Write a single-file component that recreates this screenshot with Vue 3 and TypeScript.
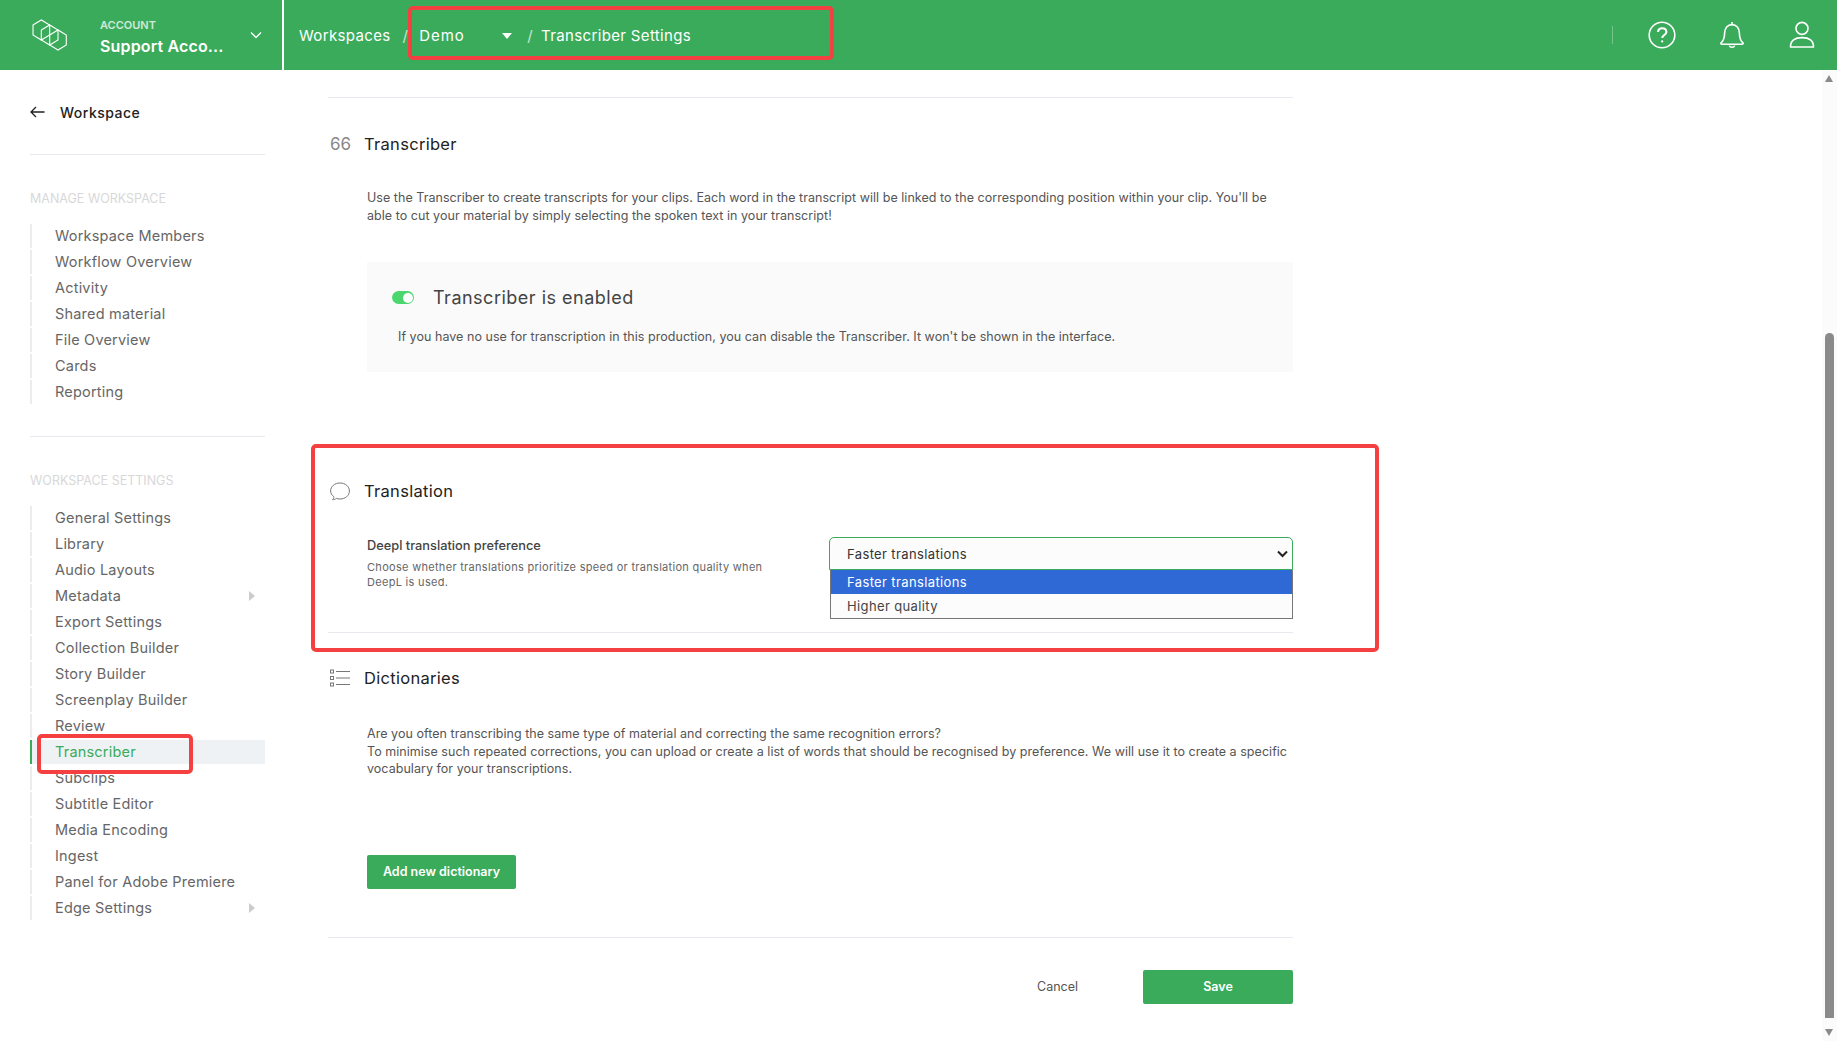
<script setup lang="ts">
interface NavItem {
  label: string
  active?: boolean
  more?: boolean
}

const manageItems: NavItem[] = [
  { label: 'Workspace Members' },
  { label: 'Workflow Overview' },
  { label: 'Activity' },
  { label: 'Shared material' },
  { label: 'File Overview' },
  { label: 'Cards' },
  { label: 'Reporting' },
]

const settingsItems: NavItem[] = [
  { label: 'General Settings' },
  { label: 'Library' },
  { label: 'Audio Layouts' },
  { label: 'Metadata', more: true },
  { label: 'Export Settings' },
  { label: 'Collection Builder' },
  { label: 'Story Builder' },
  { label: 'Screenplay Builder' },
  { label: 'Review' },
  { label: 'Transcriber', active: true },
  { label: 'Subclips' },
  { label: 'Subtitle Editor' },
  { label: 'Media Encoding' },
  { label: 'Ingest' },
  { label: 'Panel for Adobe Premiere' },
  { label: 'Edge Settings', more: true },
]
</script>

<template>
  <div class="page">
    <header class="topbar">
      <div class="account">
        <svg class="logo" width="36" height="32" viewBox="0 0 36 32" fill="none" stroke="#fff" stroke-width="1.1">
          <path d="M2 6 L10.3 1 L18.7 6 L18.7 16 L10.3 21 L2 16 Z" />
          <path d="M10.3 11 L18.7 6 L27 11 L27 21 L18.7 26 L10.3 21 L10.3 11" />
          <path d="M18.7 16 L27 11 L35.3 16 L35.3 26 L27 31 L18.7 26 L18.7 16" />
        </svg>
        <div class="account-text">
          <span class="account-label">ACCOUNT</span>
          <span class="account-name">Support Acco...</span>
        </div>
        <svg class="chevron" width="12" height="8" viewBox="0 0 12 8" fill="none" stroke="#fff" stroke-width="1.3">
          <path d="M1 1.5 L6 6.5 L11 1.5" />
        </svg>
      </div>
      <nav class="crumbs">
        <span>Workspaces</span>
        <span class="sep first">/</span>
        <span class="demo">Demo</span>
        <span class="caret"></span>
        <span class="sep">/</span>
        <span>Transcriber Settings</span>
      </nav>
      <div class="top-icons">
        <span class="icon-sep"></span>
        <svg width="30" height="30" viewBox="0 0 30 30" fill="none" stroke="#fff" stroke-width="1.6">
          <circle cx="15" cy="15" r="12.8" />
          <path d="M11 12 C11 6.8 19.4 7 19.4 12 C19.4 15 15.2 15 15.2 18" stroke-width="2" />
          <circle cx="15.2" cy="21.4" r="1.1" fill="#fff" stroke="none" />
        </svg>
        <svg width="30" height="30" viewBox="0 0 30 30" fill="none" stroke="#fff" stroke-width="1.6">
          <path d="M4 22.8 C7 20.5 7.6 18 7.6 13 C7.6 8 10.6 4.6 15 4.6 C19.4 4.6 22.4 8 22.4 13 C22.4 18 23 20.5 26 22.8 C26.4 23.6 26 24.2 25 24.2 L5 24.2 C4 24.2 3.6 23.6 4 22.8 Z" />
          <path d="M15 2 L15 4.6 M12.4 25.6 C13 27.8 17 27.8 17.6 25.6" />
        </svg>
        <svg width="30" height="30" viewBox="0 0 30 30" fill="none" stroke="#fff" stroke-width="1.6">
          <circle cx="15" cy="8.4" r="6" />
          <path d="M3.6 27 L26.4 27 C26.8 20.6 22 17.6 15 17.6 C8 17.6 3.2 20.6 3.6 27 Z" />
        </svg>
      </div>
    </header>

    <div class="content">
      <aside class="sidebar">
        <div class="back">
          <svg width="15" height="12" viewBox="0 0 15 12" fill="none" stroke="#222" stroke-width="1.3">
            <path d="M14.5 6 L1 6 M6 1 L1 6 L6 11" />
          </svg>
          <span>Workspace</span>
        </div>
        <hr class="side-rule" />

        <h4 class="side-title">MANAGE WORKSPACE</h4>
        <ul class="side-list">
          <li v-for="item in manageItems" :key="item.label">{{ item.label }}</li>
        </ul>
        <hr class="side-rule second" />

        <h4 class="side-title">WORKSPACE SETTINGS</h4>
        <ul class="side-list">
          <li v-for="item in settingsItems" :key="item.label" :class="{ active: item.active }">
            {{ item.label }}
            <span v-if="item.more" class="more"></span>
          </li>
        </ul>
      </aside>

      <main class="main">
        <hr class="rule" />

        <section class="transcriber">
          <h3 class="section-head">
            <span class="quote-icon">66</span>
            Transcriber
          </h3>
          <p class="text intro">
            Use the Transcriber to create transcripts for your clips. Each word in the transcript will be linked to the corresponding position within your clip. You'll be able to cut your material by simply selecting the spoken text in your transcript!
          </p>
          <div class="enable-box">
            <div class="enable-head">
              <span class="toggle"></span>
              <span>Transcriber is enabled</span>
            </div>
            <p class="text enable-text">If you have no use for transcription in this production, you can disable the Transcriber. It won't be shown in the interface.</p>
          </div>
        </section>

        <section class="translation">
          <h3 class="section-head">
            <svg class="head-icon" width="20" height="20" viewBox="0 0 20 20" fill="none" stroke="#777" stroke-width="1">
              <path d="M2.6 18.6 C3.6 17.6 4 16.8 3.8 15.6 C1.8 14.2 .6 12.2 .6 10 C.6 5.4 4.8 2 10 2 C15.2 2 19.4 5.4 19.4 10 C19.4 14.6 15.2 18 10 18 C8.6 18 7.4 17.8 6.4 17.4 C5.4 18.2 4 18.8 2.6 18.6 Z" />
            </svg>
            Translation
          </h3>
          <div class="pref-row">
            <div class="pref-text">
              <div class="pref-label">Deepl translation preference</div>
              <div class="pref-desc">Choose whether translations prioritize speed or translation quality when DeepL is used.</div>
            </div>
            <div class="select-wrap">
              <div class="select-box">
                <span>Faster translations</span>
                <svg width="11" height="8" viewBox="0 0 11 8" fill="none" stroke="#222" stroke-width="2">
                  <path d="M1 1.5 L5.5 6 L10 1.5" />
                </svg>
              </div>
              <div class="select-list">
                <div class="option selected">Faster translations</div>
                <div class="option">Higher quality</div>
              </div>
            </div>
          </div>
          <hr class="rule" />
        </section>

        <section class="dictionaries">
          <h3 class="section-head">
            <svg class="head-icon" width="20" height="18" viewBox="0 0 20 18" fill="none" stroke="#777" stroke-width="1">
              <rect x=".5" y="1" width="3" height="3" />
              <rect x=".5" y="7.5" width="3" height="3" />
              <rect x=".5" y="14" width="3" height="3" />
              <path d="M6 2.5 L20 2.5 M6 9 L20 9 M6 15.5 L20 15.5" />
            </svg>
            Dictionaries
          </h3>
          <p class="text dict-text">
            Are you often transcribing the same type of material and correcting the same recognition errors?<br />
            To minimise such repeated corrections, you can upload or create a list of words that should be recognised by preference. We will use it to create a specific vocabulary for your transcriptions.
          </p>
          <button class="btn add-btn">Add new dictionary</button>
          <hr class="rule" />
        </section>

        <div class="actions">
          <button class="cancel">Cancel</button>
          <button class="btn save">Save</button>
        </div>
      </main>

      <div class="scrollbar">
        <span class="arrow up"></span>
        <span class="thumb"></span>
        <span class="arrow down"></span>
      </div>
    </div>

    <!-- annotation frames on top of the screenshot -->
    <span class="mark mark-crumbs"></span>
    <span class="mark mark-nav"></span>
    <span class="mark mark-translation"></span>
  </div>
</template>

<style scoped>
.page {
  position: relative;
  width: 1837px;
  height: 1041px;
  overflow: hidden;
  font-family: Inter, "Noto Sans", sans-serif;
  color: #333;
  background: #fff;
}

.topbar {
  display: flex;
  align-items: center;
  height: 70px;
  background: #3aab5b;
  color: #fff;
}

.account {
  display: flex;
  align-items: center;
  flex: none;
  width: 284px;
  height: 70px;
  padding: 0 20px 0 31px;
  box-sizing: border-box;
  border-right: 2px solid #fff;
}

.logo {
  flex: none;
}

.account-text {
  display: flex;
  flex-direction: column;
  flex: none;
  margin-left: 33px;
  padding-top: 3px;
  width: 150px;
}

.account-label {
  font-size: 11px;
  font-weight: 600;
  opacity: 0.75;
}

.account-name {
  font-size: 16px;
  font-weight: 600;
  letter-spacing: 0.15px;
  margin-top: 4px;
  white-space: nowrap;
}

.crumbs {
  display: flex;
  align-items: center;
  margin-left: 15px;
  font-size: 15px;
  letter-spacing: 0.35px;
}

.sep {
  margin: 0 8px 0 15px;
  opacity: 0.7;
}

.sep.first {
  margin: 0 11px 0 12px;
}

.demo {
  width: 83px;
  letter-spacing: 0.9px;
}

.caret {
  width: 0;
  height: 0;
  border-left: 5px solid transparent;
  border-right: 5px solid transparent;
  border-top: 6px solid #fff;
  margin-top: 2px;
}

.top-icons {
  display: flex;
  align-items: center;
  gap: 40px;
  margin-left: auto;
  padding-right: 20px;
}

.icon-sep {
  width: 1px;
  height: 18px;
  background: rgba(255, 255, 255, 0.3);
  margin-right: -6px;
}

.content {
  display: flex;
  height: 971px;
}

.sidebar {
  flex: none;
  width: 283px;
  padding: 0 18px 0 30px;
  box-sizing: border-box;
}

.back {
  display: flex;
  align-items: center;
  gap: 15px;
  height: 84px;
  font-size: 14px;
  font-weight: 500;
  letter-spacing: 0.5px;
  color: #222;
}

.side-rule {
  height: 1px;
  margin: 0;
  border: 0;
  background: #e8e9ee;
}

.side-rule.second {
  margin-top: 32px;
}

.side-title {
  margin: 36px 0 17px;
  font-size: 12.5px;
  font-weight: 400;
  line-height: 16px;
  color: #d8d8d8;
}

.side-list {
  margin: 0;
  padding: 0;
  list-style: none;
}

.side-list li {
  position: relative;
  height: 24px;
  margin-bottom: 2px;
  padding-left: 23px;
  border-left: 2px solid #ececec;
  font-size: 14.5px;
  letter-spacing: 0.2px;
  line-height: 24px;
  color: #666;
}

.side-list li.active {
  background: #eff2f4;
  border-left-color: #3aab5b;
  color: #3aab5b;
}

.more {
  position: absolute;
  right: 10px;
  top: 7px;
  border-left: 6px solid #ccc;
  border-top: 5px solid transparent;
  border-bottom: 5px solid transparent;
}

.main {
  flex: none;
  width: 965px;
  margin-left: 45px;
  padding-top: 27px;
}

.rule {
  height: 1px;
  margin: 0;
  border: 0;
  background: #e8e9ee;
}

.section-head {
  display: flex;
  align-items: center;
  height: 24px;
  margin: 0;
  font-size: 16.5px;
  font-weight: 400;
  letter-spacing: 0.3px;
  color: #222;
}

.quote-icon {
  width: 36px;
  font-size: 17px;
  font-weight: 400;
  letter-spacing: 0;
  color: #888;
  padding-left: 2px;
  box-sizing: border-box;
}

.head-icon {
  margin: 0 14px 0 2px;
}

.text {
  margin: 0;
  font-size: 12.5px;
  letter-spacing: 0.04px;
  line-height: 17.5px;
  color: #555;
}

.transcriber {
  padding-top: 34px;
}

.intro {
  margin: 33px 0 0 39px;
  padding-right: 14px;
}

.enable-box {
  height: 110px;
  margin: 38px 0 0 39px;
  padding: 25px 30px 0 25px;
  box-sizing: border-box;
  background: #fafafa;
}

.enable-head {
  display: flex;
  align-items: center;
  gap: 19px;
  font-size: 18px;
  letter-spacing: 0.5px;
  color: #444;
  margin-bottom: 20px;
}

.enable-text {
  margin-left: 6px;
}

.toggle {
  position: relative;
  width: 22px;
  height: 13px;
  border-radius: 7px;
  background: #4cd66e;
}

.toggle::after {
  content: '';
  position: absolute;
  right: 1px;
  top: 1.5px;
  width: 10px;
  height: 10px;
  border-radius: 50%;
  background: #fff;
}

.translation {
  padding-top: 107px;
}

.pref-row {
  display: flex;
  margin-top: 34px;
  height: 95px;
}

.pref-text {
  width: 500px;
  padding-left: 39px;
  box-sizing: border-box;
}

.pref-label {
  font-size: 12.8px;
  font-weight: 500;
  line-height: 18px;
  color: #444;
}

.pref-desc {
  margin-top: 5px;
  width: 410px;
  font-size: 11px;
  letter-spacing: 0.3px;
  line-height: 15px;
  color: #666;
}

.select-wrap {
  width: 464px;
  margin-left: 1px;
}

.select-box {
  display: flex;
  align-items: center;
  justify-content: space-between;
  height: 33px;
  padding: 1px 4px 0 17px;
  box-sizing: border-box;
  border: 1px solid #3aab5b;
  border-radius: 5px 5px 0 0;
  background: #fcfcfc;
  font-size: 13px;
  letter-spacing: 0.37px;
  color: #333;
}

.select-list {
  margin-left: 1px;
  border: 1px solid #777;
  border-top: 0;
  background: #fcfcfc;
}

.option {
  height: 24px;
  padding-left: 16px;
  font-size: 13px;
  letter-spacing: 0.37px;
  line-height: 24px;
  color: #444;
}

.option.selected {
  background: #2f69d6;
  color: #fff;
}

.dictionaries {
  padding-top: 33px;
}

.dict-text {
  margin: 35px 0 0 39px;
}

.btn {
  border: 0;
  border-radius: 2px;
  background: #3aab5b;
  color: #fff;
  font-family: inherit;
  font-size: 12.5px;
  font-weight: 600;
}

.add-btn {
  display: block;
  width: 149px;
  height: 34px;
  margin: 77px 0 48px 39px;
}

.actions {
  display: flex;
  align-items: center;
  justify-content: flex-end;
  margin-top: 32px;
}

.cancel {
  border: 0;
  background: none;
  color: #555;
  font-family: inherit;
  font-size: 12.5px;
  margin-right: 65px;
  padding: 0;
}

.save {
  width: 150px;
  height: 34px;
}

.scrollbar {
  position: absolute;
  right: 0;
  top: 70px;
  width: 15px;
  height: 971px;
  background: #fbfbfb;
}

.thumb {
  position: absolute;
  left: 3px;
  top: 263px;
  width: 9px;
  height: 685px;
  border-radius: 5px 5px 0 0;
  background: #8a8a8a;
}

.arrow {
  position: absolute;
  left: 3px;
  width: 0;
  height: 0;
  border-left: 4.5px solid transparent;
  border-right: 4.5px solid transparent;
}

.arrow.up {
  top: 5px;
  border-bottom: 7px solid #8a8a8a;
}

.arrow.down {
  bottom: 5px;
  border-top: 7px solid #8a8a8a;
}

.mark {
  position: absolute;
  box-sizing: border-box;
  border: 4px solid #f44040;
  border-radius: 5px;
}

.mark-crumbs {
  left: 408px;
  top: 6px;
  width: 426px;
  height: 54px;
}

.mark-nav {
  left: 37px;
  top: 734px;
  width: 156px;
  height: 40px;
}

.mark-translation {
  left: 311px;
  top: 444px;
  width: 1068px;
  height: 208px;
}
</style>
